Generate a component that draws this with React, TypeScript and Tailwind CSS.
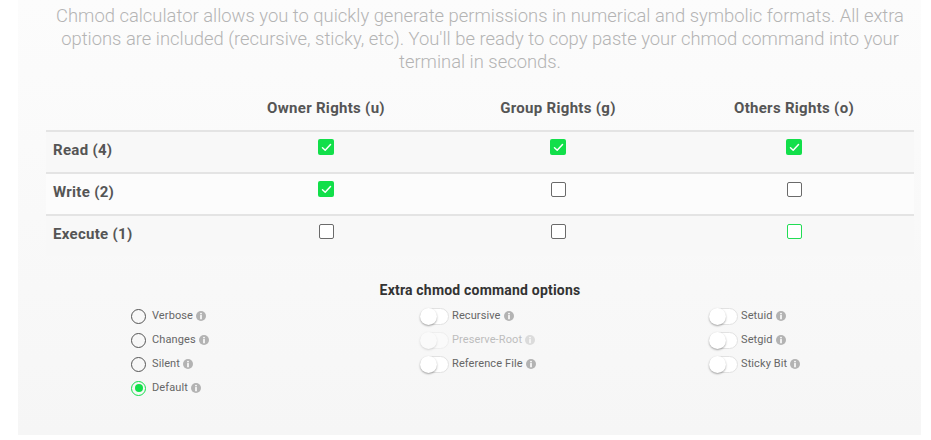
import React from "react";

const font = { fontFamily: "Roboto, 'Open Sans', sans-serif" };

function Info() {
  return (
    <svg width="10" height="10" viewBox="0 0 10 10" className="ml-[3px] shrink-0">
      <circle cx="5" cy="5" r="5" fill="#b3b3b3" />
      <circle cx="5" cy="2.6" r="0.9" fill="#fff" />
      <rect x="4.2" y="4" width="1.6" height="4.2" rx="0.3" fill="#fff" />
    </svg>
  );
}

function Check({ on, focus }: { on: boolean; focus?: boolean }) {
  if (on)
    return (
      <div className="w-[16px] h-[16px] rounded-[2px] bg-[#12df4a] flex items-center justify-center">
        <svg width="11" height="9" viewBox="0 0 11 9">
          <path d="M1.5 4.8 L4.2 7.2 L9.5 1.6" stroke="#fff" strokeWidth="1.5" fill="none" strokeLinecap="round" strokeLinejoin="round" />
        </svg>
      </div>
    );
  return (
    <div
      className={
        "w-[15px] h-[15px] rounded-[2px] border-[1.5px] bg-white " +
        (focus ? "border-[#22dd55]" : "border-[#6a6a6a]")
      }
    />
  );
}

function Radio({ label, on }: { label: string; on?: boolean }) {
  return (
    <div className="flex items-center h-[24px]">
      <div
        className={
          "w-[15px] h-[15px] rounded-full border-[1.5px] flex items-center justify-center " +
          (on ? "border-[#12df4a]" : "border-[#555]")
        }
      >
        {on && <div className="w-[8px] h-[8px] rounded-full bg-[#12df4a]" />}
      </div>
      <span className="ml-[6px] text-[11px] text-[#666] tracking-[0.1px]">{label}</span>
      <Info />
    </div>
  );
}

function Toggle({ label, disabled }: { label: string; disabled?: boolean }) {
  return (
    <div className={"flex items-center h-[24px] " + (disabled ? "opacity-40" : "")}>
      <div className="relative w-[29px] h-[17px] rounded-full bg-white border border-[#e2e2e2]">
        <div className="absolute left-[-1px] top-[-1px] w-[17px] h-[17px] rounded-full bg-white shadow-[0_1px_2px_rgba(0,0,0,0.35)]" />
      </div>
      <span className="ml-[3px] text-[11px] text-[#666] tracking-[0.1px]">{label}</span>
      <Info />
    </div>
  );
}

const rows = [
  { label: "Read (4)", vals: [true, true, true] },
  { label: "Write (2)", vals: [true, false, false] },
  { label: "Execute (1)", vals: [false, false, false] },
];

export default function App() {
  return (
    <div className="w-[931px] h-[440px] bg-white overflow-hidden" style={font}>
      <div className="ml-[18px] w-[903px] h-[435px] bg-gradient-to-b from-[#fcfcfc] to-[#f6f6f6] pt-[4px]">
        <p className="mx-[28px] w-[868px] text-center text-[18.4px] leading-[23px] font-light text-[#b4b4b4] whitespace-nowrap">
          Chmod calculator allows you to quickly generate permissions in numerical and symbolic formats. All extra
          <br />
          options are included (recursive, sticky, etc). You'll be ready to copy paste your chmod command into your
          <br />
          terminal in seconds.
        </p>
        <div className="ml-[28px] w-[868px]">
          <div className="grid grid-cols-[164px_232px_232px_240px] h-[57px] items-end pb-[12px] text-[15px] leading-[20px] font-bold text-[#555] tracking-[0.3px]">
            <div />
            <div className="text-center">Owner Rights (u)</div>
            <div className="text-center">Group Rights (g)</div>
            <div className="text-center">Others Rights (o)</div>
          </div>
          {rows.map((r, i) => (
            <div
              key={r.label}
              className={
                "grid grid-cols-[164px_232px_232px_240px] h-[42px] items-center border-t-2 border-[#e4e4e4] pb-[3px] " +
                (i % 2 === 0 ? "bg-[#f8f8f8]" : "bg-[#fcfcfc]")
              }
            >
              <div className="pl-[7px] text-[15px] font-bold text-[#555] tracking-[0.3px]">{r.label}</div>
              {r.vals.map((v, j) => (
                <div key={j} className="flex justify-center mb-[7px]">
                  <Check on={v} focus={i === 2 && j === 2} />
                </div>
              ))}
            </div>
          ))}
        </div>
        <div className="mt-[25px] ml-[28px] w-[868px] text-center text-[14px] leading-[18px] font-bold text-[#333] tracking-[0.2px]">
          Extra chmod command options
        </div>
        <div className="ml-[113px] mt-[5px] grid grid-cols-[289px_289px_auto]">
          <div>
            <Radio label="Verbose" />
            <Radio label="Changes" />
            <Radio label="Silent" />
            <Radio label="Default" on />
          </div>
          <div>
            <Toggle label="Recursive" />
            <Toggle label="Preserve-Root" disabled />
            <Toggle label="Reference File" />
          </div>
          <div>
            <Toggle label="Setuid" />
            <Toggle label="Setgid" />
            <Toggle label="Sticky Bit" />
          </div>
        </div>
      </div>
    </div>
  );
}
